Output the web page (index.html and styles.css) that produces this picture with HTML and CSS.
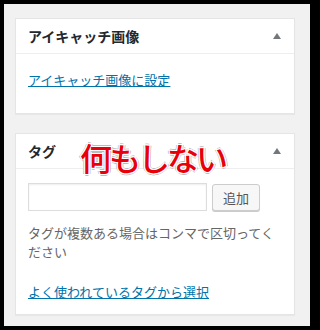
FILE: index.html
```html
<!DOCTYPE html>
<html lang="ja">
<head>
<meta charset="utf-8">
<link rel="stylesheet" href="styles.css">
</head>
<body>
<div class="frame">
  <div class="postbox">
    <div class="hndle">
      <h2 class="title">アイキャッチ画像</h2>
      <span class="toggle"></span>
    </div>
    <div class="inside first">
      <a class="link" href="#">アイキャッチ画像に設定</a>
    </div>
  </div>
  <div class="postbox tagbox">
    <div class="hndle">
      <h2 class="title">タグ</h2>
      <span class="toggle"></span>
    </div>
    <div class="inside">
      <div class="addrow">
        <input class="newtag" type="text">
        <button class="btn" type="button">追加</button>
      </div>
      <p class="howto">タグが複数ある場合はコンマで区切ってください</p>
      <a class="link cloud" href="#">よく使われているタグから選択</a>
    </div>
    <div class="note">何もしない</div>
  </div>
</div>
</body>
</html>
```
FILE: styles.css
```css
html, body {
  margin: 0;
  padding: 0;
  background: #000;
}
body {
  width: 314px;
  height: 330px;
  padding: 4px;
  box-sizing: border-box;
  font-family: "Noto Sans CJK JP", "Noto Sans", sans-serif;
}
.frame {
  background: #f1f1f1;
  height: 322px;
  padding: 14px 15px 0 11px;
  box-sizing: border-box;
}
.postbox {
  background: #fff;
  border: 1px solid #e5e5e5;
  box-shadow: 0 1px 1px rgba(0,0,0,0.04);
  position: relative;
}
.tagbox {
  margin-top: 19px;
}
.hndle {
  height: 34px;
  border-bottom: 1px solid #eee;
  display: flex;
  align-items: center;
  justify-content: space-between;
  padding: 0 13px 0 12px;
}
.title {
  margin: 0;
  font-size: 14px;
  font-weight: 700;
  color: #23282d;
  line-height: 20px;
}
.toggle {
  width: 0;
  height: 0;
  border-left: 4px solid transparent;
  border-right: 4px solid transparent;
  border-bottom: 6px solid #72777c;
}
.inside {
  padding: 14px 12px 12px;
}
.inside.first {
  padding: 12px 12px 23px;
}
.link {
  font-size: 13px;
  line-height: 19px;
  color: #0073aa;
  text-decoration: underline;
  display: inline-block;
}
.addrow {
  display: flex;
  align-items: center;
  gap: 5px;
}
.newtag {
  width: 179px;
  height: 28px;
  box-sizing: border-box;
  border: 1px solid #ddd;
  box-shadow: inset 0 1px 2px rgba(0,0,0,0.07);
  margin: 0;
  padding: 0;
}
.btn {
  width: 48px;
  height: 27px;
  border: 1px solid #ccc;
  border-radius: 3px;
  background: #f7f7f7;
  box-shadow: 0 1px 0 #ccc;
  font-family: inherit;
  font-size: 13px;
  color: #555;
  padding: 0;
  margin: 0;
}
.howto {
  margin: 12px 0 0;
  font-size: 13px;
  line-height: 19px;
  color: #666;
}
.cloud {
  margin-top: 21px;
}
.note {
  position: absolute;
  left: 64px;
  top: 3px;
  font-size: 32px;
  line-height: 40px;
  font-weight: 500;
  letter-spacing: -3px;
  color: #e8000b;
  text-shadow:
    1px 0 0 #fff, -1px 0 0 #fff, 0 1px 0 #fff, 0 -1px 0 #fff,
    1px 1px 0 #fff, -1px -1px 0 #fff, 1px -1px 0 #fff, -1px 1px 0 #fff,
    2px 0 0 #bbb, -2px 0 0 #bbb, 0 2px 0 #bbb, 0 -2px 0 #bbb;
}
```
